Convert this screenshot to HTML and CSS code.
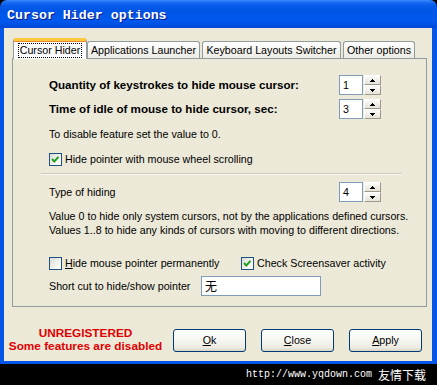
FILE: index.html
```html
<!DOCTYPE html>
<html>
<head>
<meta charset="utf-8">
<title>Cursor Hider options</title>
<link rel="stylesheet" href="styles.css">
</head>
<body>
<div class="window">
  <div class="titlebar"><span class="title">Cursor Hider options</span></div>
  <div class="frame">
    <div class="tabs">
      <div class="tab active w1"><span class="focus">Cursor Hider</span></div>
      <div class="tab w2">Applications Launcher</div>
      <div class="tab w3">Keyboard Layouts Switcher</div>
      <div class="tab w4">Other options</div>
    </div>
    <div class="panel">
      <div class="row spinrow r1">
        <span class="bold">Quantity of keystrokes to hide mouse cursor:</span>
        <div class="spin">
          <div class="spin-input">1</div>
          <div class="spin-btns">
            <div class="sb"><svg width="5" height="3" viewBox="0 0 5 3"><polygon points="0,3 5,3 2.5,0" fill="#000"/></svg></div>
            <div class="sb"><svg width="5" height="3" viewBox="0 0 5 3"><polygon points="0,0 5,0 2.5,3" fill="#000"/></svg></div>
          </div>
        </div>
      </div>
      <div class="row spinrow r2">
        <span class="bold">Time of idle of mouse to hide cursor, sec:</span>
        <div class="spin">
          <div class="spin-input">3</div>
          <div class="spin-btns">
            <div class="sb"><svg width="5" height="3" viewBox="0 0 5 3"><polygon points="0,3 5,3 2.5,0" fill="#000"/></svg></div>
            <div class="sb"><svg width="5" height="3" viewBox="0 0 5 3"><polygon points="0,0 5,0 2.5,3" fill="#000"/></svg></div>
          </div>
        </div>
      </div>
      <div class="row note">To disable feature set the value to 0.</div>
      <div class="row chkrow chk1">
        <label class="check"><span class="box checked"><svg width="11" height="11" viewBox="0 0 11 11"><polyline points="2,5 4.3,7.5 8.5,2.8" fill="none" stroke="#21A121" stroke-width="2"/></svg></span>Hide pointer with mouse wheel scrolling</label>
      </div>
      <div class="sep"></div>
      <div class="row spinrow r3">
        <span>Type of hiding</span>
        <div class="spin">
          <div class="spin-input">4</div>
          <div class="spin-btns">
            <div class="sb"><svg width="5" height="3" viewBox="0 0 5 3"><polygon points="0,3 5,3 2.5,0" fill="#000"/></svg></div>
            <div class="sb"><svg width="5" height="3" viewBox="0 0 5 3"><polygon points="0,0 5,0 2.5,3" fill="#000"/></svg></div>
          </div>
        </div>
      </div>
      <div class="row desc">Value 0 to hide only system cursors, not by the applications defined cursors.<br>Values 1..8 to hide any kinds of cursors with moving to different directions.</div>
      <div class="row chkrow chk2">
        <label class="check"><span class="box"></span><u>H</u>ide mouse pointer permanently</label>
        <label class="check"><span class="box checked"><svg width="11" height="11" viewBox="0 0 11 11"><polyline points="2,5 4.3,7.5 8.5,2.8" fill="none" stroke="#21A121" stroke-width="2"/></svg></span>Check Screensaver activity</label>
      </div>
      <div class="row short">
        <span>Short cut to hide/show pointer</span>
        <div class="textbox">无</div>
      </div>
    </div>
    <div class="footer">
      <div class="unreg">UNREGISTERED<br>Some features are disabled</div>
      <div class="buttons">
        <button class="btn"><u>O</u>k</button>
        <button class="btn"><u>C</u>lose</button>
        <button class="btn"><u>A</u>pply</button>
      </div>
    </div>
  </div>
</div>
<div class="watermark"><span class="wm-url">http://www.yqdown.com</span><span class="wm-cjk">友情下载</span></div>
</body>
</html>
```

FILE: styles.css
```css
* { box-sizing: border-box; }
html, body { margin: 0; padding: 0; }
body {
  width: 437px;
  height: 385px;
  overflow: hidden;
  background: #000;
  font-family: "Liberation Sans", Arial, sans-serif;
  font-size: 10.7px;
  color: #000;
}
.window {
  width: 437px;
  display: flex;
  flex-direction: column;
}
.titlebar {
  height: 28px;
  border-radius: 7px 7px 0 0;
  background: linear-gradient(180deg, #3C8DFF 0px, #1F6FF5 2px, #0A5DEB 5px, #0055E5 10px, #0058EE 20px, #0050E2 25px, #0045D2 28px);
  padding: 0 0 0 7px;
  display: flex;
  align-items: center;
}
.title {
  font-family: "Liberation Mono", "DejaVu Sans Mono", monospace;
  font-weight: bold;
  font-size: 13.3px;
  color: #fff;
  text-shadow: 1px 1px 0 #0A1A8A;
  padding-top: 3px;
}
.frame {
  background: #ECE9D8;
  border-style: solid;
  border-color: #0555E6;
  border-width: 0 5px 3px 4px;
  height: 336px;
  padding: 10px 0 0 8px;
}
.tabs {
  height: 20px;
  display: flex;
  align-items: flex-end;
  padding-left: 3px;
  position: relative;
  z-index: 2;
}
.tab {
  height: 17px;
  margin-right: 2px;
  border: 1px solid #919B9C;
  border-bottom: none;
  border-radius: 3px 3px 0 0;
  background: linear-gradient(180deg, #FFFFFF 0%, #F7F7F4 40%, #ECEBE5 100%);
  display: flex;
  align-items: center;
  justify-content: center;
  white-space: nowrap;
  line-height: 13px;
  padding-top: 1px;
}
.w1 { width: 70px; }
.w2 { width: 113px; }
.w3 { width: 139px; }
.w4 { width: 72px; }
.tab.active {
  width: 74px;
  height: 21px;
  margin: 0 0 -1px -2px;
  background: #FCFCFE;
  border-top: 3px solid #FFC83C;
  border-color: #FFC83C #919B9C #919B9C #919B9C;
  box-shadow: inset 0 1px 0 #E68B2C;
  padding-top: 0;
}
.focus {
  border: 1px dotted #000;
  padding: 0 1px;
  line-height: 13px;
}
.panel {
  width: 415px;
  height: 249px;
  border: 1px solid #919B9C;
  background: #ECE9D8;
  padding: 0 0 0 36px;
  display: flex;
  flex-direction: column;
}
.row { display: flex; align-items: center; line-height: 14px; }
.spinrow {
  height: 20px;
  justify-content: space-between;
  padding-right: 45px;
}
.r1 { margin-top: 16px; }
.r2 { margin-top: 4px; }
.r3 { margin-top: 7px; }
.bold { font-weight: bold; font-size: 11.6px; }
.note { margin-top: 8px; }
.chk1 { margin-top: 11px; height: 14px; }
.sep {
  margin: 7px 0 0 -8px;
  width: 361px;
  height: 2px;
  border-top: 1px solid #CFCCBC;
  border-bottom: 1px solid #F7F6F0;
}
.desc { display: block; margin-top: 7px; }
.chk2 { margin-top: 19px; height: 14px; }
.chk2 .check:first-child { width: 192px; }
.check { display: flex; align-items: center; white-space: nowrap; }
.box {
  width: 13px;
  height: 13px;
  border: 1px solid #1C5180;
  background: linear-gradient(135deg, #DCDCD7 0%, #F4F4F0 60%, #FFFFFF 100%);
  margin-right: 3px;
  display: flex;
  align-items: center;
  justify-content: center;
}
.spin { display: flex; height: 20px; }
.spin-input {
  width: 24px;
  height: 20px;
  border: 1px solid #7F9DB9;
  background: #fff;
  padding-left: 3px;
  line-height: 18px;
}
.spin-btns {
  width: 17px;
  height: 20px;
  display: flex;
  flex-direction: column;
  margin-left: 1px;
}
.sb {
  flex: 1;
  border: 1px solid;
  border-color: #FFFFFF #9D9A8D #9D9A8D #FFFFFF;
  background: linear-gradient(180deg, #FBFBF8, #E6E3D8);
  display: flex;
  align-items: center;
  justify-content: center;
}
.sb svg { display: block; shape-rendering: crispEdges; }
.short { margin-top: 6px; height: 20px; }
.short span { width: 152px; }
.textbox {
  width: 120px;
  height: 20px;
  border: 1px solid #7F9DB9;
  background: #fff;
  padding-left: 3px;
  line-height: 18px;
  font-family: "Noto Sans CJK SC", sans-serif;
  font-size: 12px;
}
.footer {
  display: flex;
  align-items: center;
  padding-top: 20px;
  margin-left: -4px;
}
.unreg {
  width: 155px;
  flex-shrink: 0;
  text-align: center;
  white-space: nowrap;
  color: #E00000;
  font-weight: bold;
  font-size: 11.8px;
  line-height: 13px;
}
.buttons { display: flex; gap: 15px; margin-left: 10px; }
.btn {
  width: 73px;
  height: 23px;
  border: 1px solid #003C74;
  border-radius: 3px;
  background: linear-gradient(180deg, #FFFFFF 0%, #F7F7F3 45%, #ECEAE1 85%, #D8D3C6 100%);
  font-family: "Liberation Sans", Arial, sans-serif;
  font-size: 10.7px;
  color: #000;
  padding: 0;
}
.watermark {
  height: 21px;
  display: flex;
  align-items: center;
  justify-content: flex-end;
  padding-right: 11px;
  color: #fff;
}
.wm-url { font-family: "Liberation Mono", monospace; font-size: 10px; }
.wm-cjk { font-family: "Noto Sans CJK SC", sans-serif; font-size: 12px; margin-left: 6px; }
```
